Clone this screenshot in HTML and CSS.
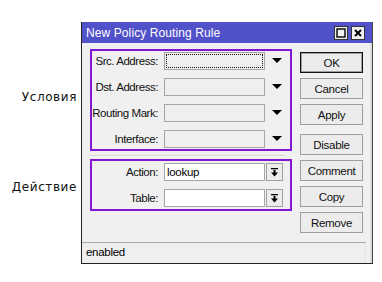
FILE: index.html
```html
<!DOCTYPE html>
<html>
<head>
<meta charset="utf-8">
<link rel="stylesheet" href="styles.css">
</head>
<body>
<div class="page">
  <div class="side">
    <div class="side-label lbl-cond">Условия</div>
    <div class="side-label lbl-act">Действие</div>
  </div>
  <div class="window">
    <div class="titlebar">
      <span class="title">New Policy Routing Rule</span>
      <div class="tb-btns">
        <span class="tb-btn"><svg width="10" height="10" viewBox="0 0 10 10"><rect x="1" y="1" width="8" height="8" fill="none" stroke="#000" stroke-width="1.4"/></svg></span>
        <span class="tb-btn"><svg width="10" height="10" viewBox="0 0 10 10"><path d="M2 2 L8 8 M8 2 L2 8" stroke="#000" stroke-width="2"/></svg></span>
      </div>
    </div>
    <div class="body">
      <div class="main">
        <div class="left">
          <div class="group group-cond">
            <div class="row">
              <span class="label">Src. Address:</span>
              <span class="field field-gray focus"><span class="focus-rect"></span></span>
              <span class="arrow"><svg width="10" height="6" viewBox="0 0 10 6"><path d="M0 0 H10 L5 5 Z" fill="#000"/></svg></span>
            </div>
            <div class="row">
              <span class="label">Dst. Address:</span>
              <span class="field field-gray"></span>
              <span class="arrow"><svg width="10" height="6" viewBox="0 0 10 6"><path d="M0 0 H10 L5 5 Z" fill="#000"/></svg></span>
            </div>
            <div class="row">
              <span class="label label-wide">Routing Mark:</span>
              <span class="field field-gray"></span>
              <span class="arrow"><svg width="10" height="6" viewBox="0 0 10 6"><path d="M0 0 H10 L5 5 Z" fill="#000"/></svg></span>
            </div>
            <div class="row">
              <span class="label">Interface:</span>
              <span class="field field-gray"></span>
              <span class="arrow"><svg width="10" height="6" viewBox="0 0 10 6"><path d="M0 0 H10 L5 5 Z" fill="#000"/></svg></span>
            </div>
          </div>
          <div class="sep"></div>
          <div class="group group-act">
            <div class="row">
              <span class="label">Action:</span>
              <span class="field field-white">lookup</span>
              <span class="dd-btn"><svg width="9" height="9" viewBox="0 0 9 9"><rect x="1" y="0" width="7" height="1.3" fill="#000"/><rect x="3.5" y="2" width="2" height="3" fill="#000"/><path d="M1 4.5 H8 L4.5 8.5 Z" fill="#000"/></svg></span>
            </div>
            <div class="row">
              <span class="label">Table:</span>
              <span class="field field-white"></span>
              <span class="dd-btn"><svg width="9" height="9" viewBox="0 0 9 9"><rect x="1" y="0" width="7" height="1.3" fill="#000"/><rect x="3.5" y="2" width="2" height="3" fill="#000"/><path d="M1 4.5 H8 L4.5 8.5 Z" fill="#000"/></svg></span>
            </div>
          </div>
        </div>
        <div class="buttons">
          <div class="btn btn-default">OK</div>
          <div class="btn">Cancel</div>
          <div class="btn">Apply</div>
          <div class="btn btn-gap">Disable</div>
          <div class="btn">Comment</div>
          <div class="btn">Copy</div>
          <div class="btn">Remove</div>
        </div>
      </div>
      <div class="status">enabled</div>
    </div>
  </div>
</div>
</body>
</html>
```

FILE: styles.css
```css
html, body {
  margin: 0;
  padding: 0;
  background: #ffffff;
}
.page {
  display: flex;
  width: 382px;
  height: 282px;
  font-family: "Liberation Sans", Arial, sans-serif;
  font-size: 11.5px;
  color: #000;
}
.side {
  width: 81px;
  display: flex;
  flex-direction: column;
  align-items: flex-end;
}
.side-label {
  font-family: "DejaVu Sans", sans-serif;
  font-size: 12px;
  letter-spacing: 0.6px;
  color: #111;
  padding-right: 4px;
  line-height: 14px;
}
.lbl-cond {
  margin-top: 90px;
}
.lbl-act {
  margin-top: 76px;
}
.window {
  margin-top: 22px;
  width: 290px;
  height: 241px;
  border-left: 1px solid #222;
  border-right: 1px solid #444;
  border-bottom: 1px solid #222;
  display: flex;
  flex-direction: column;
  background: #f0f0f0;
}
.titlebar {
  height: 21px;
  background: #5151c9;
  display: flex;
  align-items: center;
  justify-content: space-between;
  padding-left: 4px;
  padding-right: 7px;
}
.title {
  color: #fff;
  font-size: 12px;
  letter-spacing: 0.1px;
}
.tb-btns {
  display: flex;
  gap: 3px;
}
.tb-btn {
  width: 12px;
  height: 12px;
  background: #f0f0f0;
  border: 1px solid #333;
  display: flex;
  align-items: center;
  justify-content: center;
}
.body {
  flex: 1;
  display: flex;
  flex-direction: column;
  border-right: 2px solid #dcdcdc;
}
.main {
  flex: 1;
  display: flex;
  padding-left: 8px;
  padding-top: 6px;
}
.left {
  width: 202px;
  display: flex;
  flex-direction: column;
}
.group {
  border: 2px solid #8416d2;
  display: flex;
  flex-direction: column;
  gap: 8px;
}
.group-cond {
  padding: 1px 0 1px 0;
}
.group-act {
  padding: 2px 0 2px 0;
}
.row {
  height: 18px;
  display: flex;
  align-items: center;
}
.label {
  width: 66px;
  text-align: right;
  letter-spacing: -0.45px;
  color: #111;
  white-space: nowrap;
}
.field {
  margin-left: 6px;
  width: 99px;
  height: 16px;
  border: 1px solid #a6a6a6;
  display: flex;
  align-items: center;
  padding: 0;
  box-sizing: content-box;
}
.field-gray {
  background: #efefef;
}
.field-white {
  background: #fff;
  padding-left: 2px;
  width: 97px;
  letter-spacing: -0.3px;
}
.focus-rect {
  display: block;
  margin: 1px;
  width: 95px;
  height: 12px;
  border: 1px dotted #111;
}
.arrow {
  width: 24px;
  display: flex;
  justify-content: center;
  align-items: center;
}
.dd-btn {
  margin-left: 1px;
  width: 15px;
  height: 16px;
  border: 1px solid #a0a0a0;
  background: #ececec;
  display: flex;
  align-items: center;
  justify-content: center;
}
.sep {
  height: 1px;
  background: #d4d4d4;
  border-bottom: 1px solid #fafafa;
  margin: 4px 8px 2px 0;
}
.buttons {
  margin-left: 8px;
  margin-top: 3px;
  display: flex;
  flex-direction: column;
  gap: 5px;
}
.btn {
  width: 61px;
  height: 19px;
  border: 1px solid #9e9e9e;
  background: #ececec;
  display: flex;
  align-items: center;
  justify-content: center;
  letter-spacing: -0.3px;
  color: #111;
}
.btn-default {
  border: 1px solid #111;
  box-shadow: inset 0 0 0 1px #9e9e9e;
}
.btn-gap {
  margin-top: 4px;
}
.status {
  height: 21px;
  margin-right: 4px;
  border-top: 1px solid #a8a8a8;
  border-right: 1px solid #e4e4e4;
  background: #efefef;
  display: flex;
  align-items: center;
  padding-left: 4px;
  padding-bottom: 2px;
  box-sizing: border-box;
  letter-spacing: -0.3px;
}
```
